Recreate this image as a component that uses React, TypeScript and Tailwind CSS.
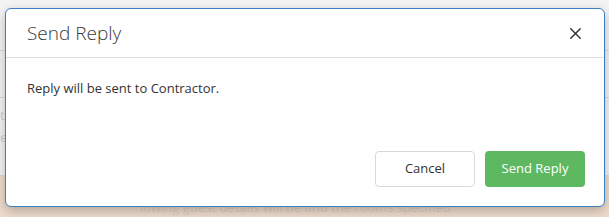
import { X } from "lucide-react";

export default function App() {
  return (
    <div
      className="relative w-[609px] h-[217px] overflow-hidden bg-[#f4f4f4]"
      style={{ fontFamily: '"Open Sans", "Noto Sans", sans-serif' }}
    >
      {/* page behind the modal */}
      <div className="flex flex-col h-full">
        <div className="h-[53px] border-b border-[#dcdcdc]" />
        <div className="h-[49px] border-b border-[#dcdcdc]" />
        <div className="h-[81px] border-b border-[#dcdcdc] pt-[8px] text-[13px] text-[#cfcfcf] leading-[18px]">
          <div>tr</div>
          <div className="mt-[4px]">e</div>
        </div>
        <div className="flex-1 bg-[#efdccd] pl-[140px] pt-[22px] text-[13px] text-[#ddcdc0]">
          lowing guest details will be and the rooms specified
        </div>
      </div>

      {/* modal */}
      <div className="absolute left-[5px] top-[8px] w-[600px] h-[199px] bg-white border border-[#3a7fc1] rounded-[6px] shadow-[0_4px_12px_rgba(0,0,0,0.25)] flex flex-col">
        <div className="flex items-center justify-between h-[49px] pl-[21px] pr-[19px] border-b border-[#dedede]">
          <h4 className="text-[19px] text-[#3a3a3a] leading-none font-light">Send Reply</h4>
          <X className="w-[19px] h-[19px] text-[#333]" strokeWidth={1.8} />
        </div>
        <div className="pl-[21px] pt-[21px] text-[13px] text-[#333] leading-[18px]">
          Reply will be sent to Contractor.
        </div>
        <div className="flex-1" />
        <div className="flex justify-end gap-[10px] pr-[19px] pb-[19px]">
          <button className="w-[100px] h-[36px] border border-[#d8d8d8] rounded-[4px] bg-white text-[13px] text-[#333]">
            Cancel
          </button>
          <button className="w-[100px] h-[36px] rounded-[4px] bg-[#5eb862] text-[13px] text-white">
            Send Reply
          </button>
        </div>
      </div>
    </div>
  );
}
